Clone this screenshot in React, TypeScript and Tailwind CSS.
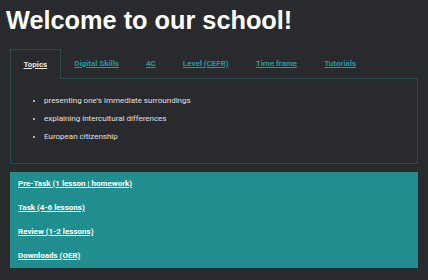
import { useState } from "react";

const TABS = ["Topics", "Digital Skills", "4C", "Level (CEFR)", "Time frame", "Tutorials"];

const TOPICS = [
	"presenting one's immediate surroundings",
	"explaining intercultural differences",
	"European citizenship",
];

const LINKS = [
	"Pre-Task (1 lesson | homework)",
	"Task (4-6 lessons)",
	"Review (1-2 lessons)",
	"Downloads (OER)",
];

function App() {
	const [active, setActive] = useState(0);

	return (
		<div className="min-h-screen bg-[#292a2e] px-[10px] pt-[4px] font-['Roboto',sans-serif]">
			<h1 className="-ml-[4px] text-[25.3px] leading-[32px] font-bold text-white font-['Liberation_Sans',Arial,sans-serif]">
				Welcome to our school!
			</h1>

			<div className="mt-[13px]">
				{/* tabs */}
				<div className="flex border-b border-[#2c4d50]">
					{TABS.map((tab, i) => (
						<button
							key={tab}
							type="button"
							onClick={() => setActive(i)}
							className={
								i === active
									? "-mb-px h-[30px] px-[12.5px] border border-b-0 border-[#2c4d50] bg-[#292a2e] text-[8px] font-bold text-[#e6e6e6] underline"
									: "-mb-px h-[30px] px-[12.5px] border border-transparent text-[8px] font-bold text-[#24999a] underline"
							}
						>
							{tab}
						</button>
					))}
				</div>

				{/* panel */}
				<div className="border border-t-0 border-[#2c4d50] pl-[25px] pt-[16px] pb-[21px]">
					<ul className="list-disc pl-[8px] flex flex-col gap-[7px] text-[8px] leading-[11px] text-[#e0e0e0]">
						{TOPICS.map((t) => (
							<li key={t}>{t}</li>
						))}
					</ul>
				</div>
			</div>

			<div className="mt-[8px] bg-[#208e8e] px-[8px] flex flex-col">
				{LINKS.map((l) => (
					<a key={l} href="#" className="h-[24px] flex items-center text-[8px] font-bold text-white underline">
						{l}
					</a>
				))}
			</div>
		</div>
	);
}

export default App;
